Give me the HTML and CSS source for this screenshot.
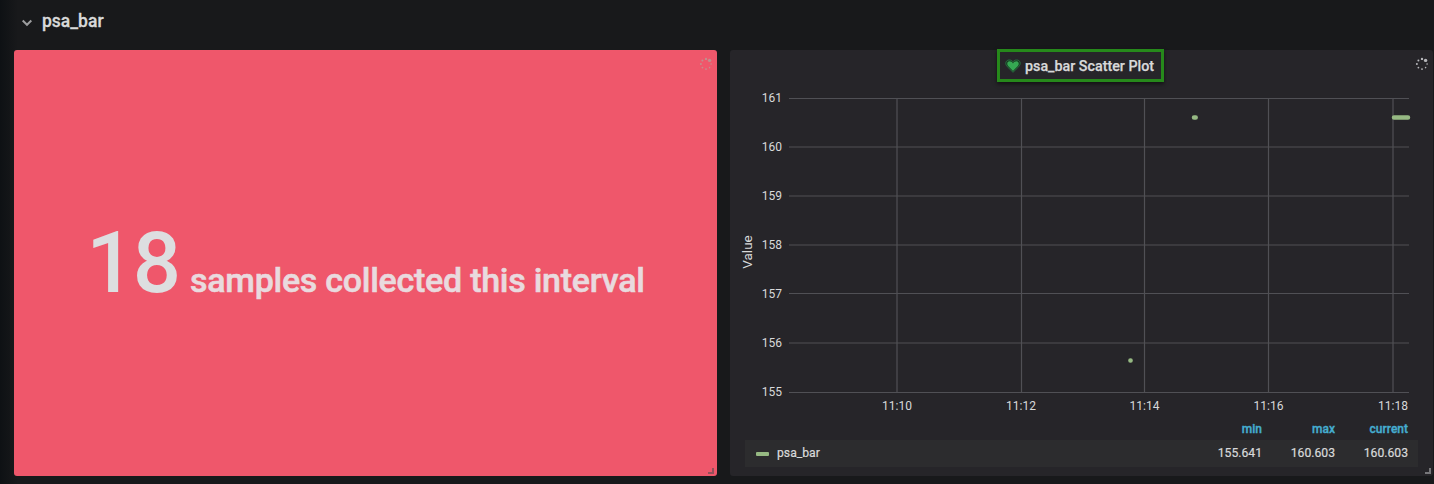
FILE: index.html
```html
<!DOCTYPE html>
<html lang="en">
<head>
<meta charset="utf-8">
<title>psa_bar</title>
<link rel="stylesheet" href="styles.css">
</head>
<body>
<main class="dashboard">
  <header class="row-header">
    <svg class="chevron" width="12" height="8" viewBox="0 0 12 8"><path d="M1.7 1.5 6 5.8 10.3 1.5"/></svg>
    <h1 class="row-title">psa_bar</h1>
  </header>
  <div class="panels">
    <section class="panel panel-stat">
      <p class="stat"><span class="stat-value">18</span><span class="stat-suffix">samples collected this interval</span></p>
      <svg class="spinner" width="14" height="14" viewBox="0 0 14 14"><circle cx="7" cy="1.9" r="1.2"/><circle cx="10.6" cy="3.4" r="1.7"/><circle cx="12.1" cy="7" r=".8"/><circle cx="10.6" cy="10.6" r=".8"/><circle cx="7" cy="12.1" r=".9"/><circle cx="3.4" cy="10.6" r=".9"/><circle cx="1.9" cy="7" r="1"/><circle cx="3.4" cy="3.4" r="1"/></svg>
      <span class="resize"></span>
    </section>
    <section class="panel panel-graph">
      <header class="graph-header">
        <h2 class="graph-title">
          <svg class="heart" width="16" height="16" viewBox="0 0 16 16"><path class="heart-outline" d="M8 14.3 2.2 8.6C-.6 5.4 1.1 2 4.2 2 6.2 2 7.3 2.8 8 3.7 8.7 2.8 9.8 2 11.8 2c3.1 0 4.8 3.4 2 6.6Z"/><path class="heart-fill" d="M8 12.9 3.1 8C1.4 5.8 2.4 3.3 4.4 3.3 6.2 3.3 7.4 4.2 8 5.4c.6-1.2 1.8-2.1 3.6-2.1 2 0 3 2.5 1.3 4.7Z"/></svg>
          <span>psa_bar Scatter Plot</span>
        </h2>
      </header>
      <svg class="chart" width="704" height="337" viewBox="730 82 704 337">
        <g class="grid">
          <path d="M789 98.5H1409M789 147H1409M789 196H1409M789 245H1409M789 293.5H1409M789 343H1409M789 392.5H1409"/>
          <path d="M897 98V392M1021.5 98V392M1144.5 98V392M1268.5 98V392M1393 98V392"/>
        </g>
        <g class="tick tick-y">
          <text x="782" y="102">161</text><text x="782" y="151">160</text><text x="782" y="200">159</text><text x="782" y="249">158</text><text x="782" y="298">157</text><text x="782" y="347">156</text><text x="782" y="396">155</text>
        </g>
        <g class="tick tick-x">
          <text x="897" y="410">11:10</text><text x="1021" y="410">11:12</text><text x="1144.5" y="410">11:14</text><text x="1268.5" y="410">11:16</text><text x="1393" y="410">11:18</text>
        </g>
        <text class="axis-label" transform="translate(752 252) rotate(-90)">Value</text>
        <g class="series">
          <path d="M1194 117.5H1195.7M1394 117.5H1408M1130.4 360.5H1130.6"/>
        </g>
      </svg>
      <div class="legend">
        <div class="legend-row legend-head"><span></span><span>min</span><span>max</span><span>current</span></div>
        <div class="legend-row legend-data"><span class="legend-name"><i class="swatch"></i>psa_bar</span><span>155.641</span><span>160.603</span><span>160.603</span></div>
      </div>
      <svg class="spinner" width="14" height="14" viewBox="0 0 14 14"><circle cx="7" cy="1.9" r="1.2"/><circle cx="10.6" cy="3.4" r="1.7"/><circle cx="12.1" cy="7" r=".8"/><circle cx="10.6" cy="10.6" r=".8"/><circle cx="7" cy="12.1" r=".9"/><circle cx="3.4" cy="10.6" r=".9"/><circle cx="1.9" cy="7" r="1"/><circle cx="3.4" cy="3.4" r="1"/></svg>
      <span class="resize"></span>
    </section>
  </div>
</main>
</body>
</html>
```
FILE: styles.css
```css
* { box-sizing: border-box; }
body {
  margin: 0;
  background: #18191b;
  color: #d8d9da;
  font-family: Roboto, "Liberation Sans", sans-serif;
}
.dashboard {
  height: 484px;
  overflow: hidden;
  padding-left: 14px;
  background: linear-gradient(90deg, #0e1114 0, #18191b 18px);
}
.row-header {
  display: flex;
  align-items: center;
  height: 50px;
  padding: 0 0 9px 7px;
}
.chevron {
  margin: 5px 9px 0 0;
  fill: none;
  stroke: #9c9d9f;
  stroke-width: 2;
}
.row-title {
  margin: 0;
  font-size: 17.5px;
  font-weight: 500;
  line-height: 24px;
  -webkit-text-stroke: .3px;
}
.panels {
  display: grid;
  grid-template-columns: 703px 703px;
  gap: 13px;
  height: 426px;
}
.panel {
  position: relative;
  border-radius: 3px;
}
.panel-stat {
  display: flex;
  align-items: center;
  justify-content: center;
  background: #ef576b;
}
.stat {
  display: flex;
  align-items: baseline;
  margin: 0;
  font-weight: 500;
  white-space: nowrap;
}
.stat-value {
  color: #dddee0;
  font-size: 85px;
  letter-spacing: -2px;
  line-height: 100px;
}
.stat-suffix {
  margin-left: 11px;
  color: #e9dade;
  font-size: 34px;
  letter-spacing: -.26px;
  -webkit-text-stroke: .6px;
}
.panel-graph {
  background: #262529;
}
.graph-header {
  display: flex;
  justify-content: center;
  height: 32px;
}
.graph-title {
  display: flex;
  align-items: center;
  gap: 4px;
  width: 167px;
  height: 33px;
  margin: -1px 2px 0 0;
  padding: 0 0 0 5px;
  border: 3px solid #26891b;
  box-shadow: 0 2px 4px rgba(0, 0, 0, .55);
  font-size: 14.3px;
  font-weight: 500;
  line-height: 20px;
  white-space: nowrap;
  -webkit-text-stroke: .25px;
}
.heart { flex: none; -webkit-text-stroke: 0; }
.heart-outline { fill: #17351f; stroke: #2b8048; stroke-width: .8; }
.heart-fill { fill: #35a852; }
.chart { display: block; }
.grid { fill: none; stroke: #505055; stroke-width: 1.2; }
.tick { fill: #d8d9da; font-size: 12px; -webkit-text-stroke: .25px #d8d9da; }
.tick-y { text-anchor: end; }
.tick-x { text-anchor: middle; }
.axis-label { fill: #d8d9da; font-size: 13.5px; text-anchor: middle; -webkit-text-stroke: .25px #d8d9da; }
.series { fill: none; stroke: #96b983; stroke-width: 4.5; stroke-linecap: round; }
.legend { padding: 0 15px; font-size: 12.2px; -webkit-text-stroke: .2px; }
.legend-row {
  display: grid;
  grid-template-columns: 1fr 72px 73px 73px;
  align-items: center;
  padding-right: 10px;
  text-align: right;
}
.legend-head {
  height: 21px;
  padding-bottom: 1px;
  color: #45add0;
  font-size: 12px;
  font-weight: 500;
  -webkit-text-stroke: .35px;
}
.legend-data {
  height: 27px;
  padding-bottom: 2px;
  background: #2c2c2e;
}
.legend-name {
  display: flex;
  align-items: center;
  padding-left: 11px;
}
.swatch {
  width: 13px;
  height: 4px;
  margin: 3px 8px 0 0;
  border-radius: 1px;
  background: #96b983;
}
.spinner {
  position: absolute;
  top: 7px;
  right: 4px;
  fill: #b7b7bb;
}
.panel-stat .spinner { fill: #c28e8d; }
.resize {
  position: absolute;
  right: 3px;
  bottom: 2px;
  width: 6px;
  height: 6px;
  border: solid #77777a;
  border-width: 0 2px 2px 0;
}
.panel-stat .resize { border-color: #94505a; }
.panel-graph .resize { right: 2px; }
```
